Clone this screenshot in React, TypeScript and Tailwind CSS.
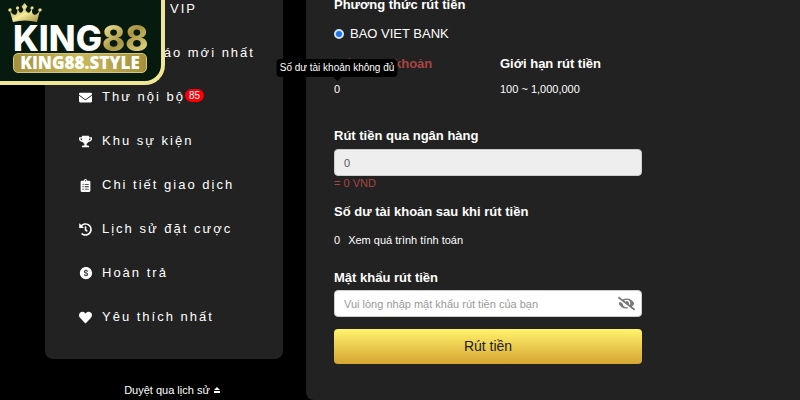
import { ReactNode, useState } from "react";
import { FaClipboardList, FaCrown, FaEnvelope, FaEyeSlash, FaHeart, FaHistory, FaTrophy } from "react-icons/fa";
import { AiFillDollarCircle } from "react-icons/ai";

interface IMenuItem {
  label: string;
  icon: ReactNode;
  badge?: number;
}

const menuItems: IMenuItem[] = [
  { label: "Cấp bậc VIP", icon: <FaCrown /> },
  { label: "Thông báo mới nhất", icon: <FaEnvelope /> },
  { label: "Thư nội bộ", icon: <FaEnvelope />, badge: 85 },
  { label: "Khu sự kiện", icon: <FaTrophy /> },
  { label: "Chi tiết giao dịch", icon: <FaClipboardList /> },
  { label: "Lịch sử đặt cược", icon: <FaHistory /> },
  { label: "Hoàn trả", icon: <AiFillDollarCircle size={14} /> },
  { label: "Yêu thích nhất", icon: <FaHeart /> },
];

const Logo = () => (
  <a
    href="#home"
    className="absolute left-0 top-0 z-20 flex h-[85px] w-[165px] flex-col items-start rounded-br-[20px] border-b-4 border-r-4 border-[#efe795] bg-[#071a10] pl-[13px]"
  >
    <svg viewBox="0 0 34 20" className="absolute left-2 top-[3px] h-5 w-[34px]" aria-hidden="true">
      <defs>
        <linearGradient id="crown" x1="0" y1="0" x2="1" y2="1">
          <stop offset="0" stopColor="#a8934a" />
          <stop offset="0.5" stopColor="#f3eb9c" />
          <stop offset="1" stopColor="#a08a3c" />
        </linearGradient>
      </defs>
      <g fill="url(#crown)">
        <path d="M5 19 L1.500 7 Q5 13 8 11.500 Q9.500 10 9.500 5 Q11.500 11 13.500 9.500 Q15.500 8 16.500 3 Q17.500 8 19.500 9.500 Q22 11 24 5 Q23.500 10 25.500 11.500 Q29 13 32 7 L29 19 Q17 16 5 19 Z" />
        <circle cx="2" cy="7" r="1.800" />
        <circle cx="9.500" cy="5" r="1.700" />
        <path d="M16.500 0 L19.500 3.500 L16.500 8 L13.500 3.500 Z" />
        <circle cx="24" cy="5" r="1.700" />
        <circle cx="32" cy="7" r="1.800" />
      </g>
    </svg>
    <span className="mt-5 flex font-['Inter',sans-serif] text-[35px] font-extrabold leading-[36px] text-white">
      KING
      <span className="bg-linear-to-br from-[#fff6ab] via-[#a89440] to-[#efe694] bg-clip-text text-transparent">88</span>
    </span>
    <span className="-mt-[3px] flex h-5 w-[134px] items-center justify-center rounded-[5px] border border-[#d5c76f] bg-linear-to-r from-[#a5903c] via-[#c9b95c] to-[#a5903c] font-['Open_Sans',sans-serif] text-[17px] font-extrabold leading-5 text-white">
      KING88.STYLE
    </span>
  </a>
);

const Sidebar = () => (
  <aside className="w-[238px] shrink-0">
    <nav className="-mt-[13px] rounded-lg bg-[#222222] pb-5 pl-[34px]">
      <ul>
        {menuItems.map((item) => (
          <li key={item.label}>
            <a href="#menu" className="flex h-11 items-center text-[13px] tracking-[2px] text-white">
              <span className="flex w-[23px] text-[13px]">{item.icon}</span>
              <span className="whitespace-nowrap">{item.label}</span>
              {item.badge && (
                <span className="mb-1 rounded-full bg-[#fb0007] px-1 text-[10px] leading-[13px] tracking-normal">
                  {item.badge}
                </span>
              )}
            </a>
          </li>
        ))}
      </ul>
    </nav>
    <button type="button" className="mt-[22px] flex w-full items-center justify-center gap-1 pl-4 text-[11px] leading-[18px] text-white">
      Duyệt qua lịch sử
      <svg viewBox="0 0 6 6" className="size-1.5" fill="currentColor" aria-hidden="true">
        <path d="M3 0 L6 3 H0 Z M0 4 H6 V6 H0 Z" />
      </svg>
    </button>
  </aside>
);

const WithdrawForm = () => {
  const [bank, setBank] = useState("bvb");
  const [showPassword, setShowPassword] = useState(false);

  return (
    <main className="-mt-[5px] min-w-0 flex-1 rounded-bl-lg bg-[#222222] px-7 pb-9 text-white">
      <form className="max-w-[308px]" onSubmit={(e) => e.preventDefault()}>
        <fieldset>
          <legend className="text-[13px] font-bold leading-5">Phương thức rút tiền</legend>
          <label className="mt-[9px] flex items-center gap-1.5 text-[13px] leading-5">
            <input
              type="radio"
              name="bank"
              checked={bank === "bvb"}
              onChange={() => setBank("bvb")}
              className="size-[10px] appearance-none rounded-full border-2 border-[#cfe2fb] bg-white checked:bg-[#1a73e8]"
            />
            BAO VIET BANK
          </label>
        </fieldset>
        <div className="mt-[10px] grid grid-cols-[166px_1fr] text-[13px] leading-5">
          <div>
            <h2 className="font-bold text-[#a94442]">Số dư tài khoản</h2>
            <p className="relative mt-[5px] text-[11px]">
              0
              <span
                role="tooltip"
                className="absolute bottom-[22px] left-[3px] w-[121px] -translate-x-1/2 whitespace-nowrap rounded bg-black text-center text-[10px] leading-[18px]"
              >
                Số dư tài khoản không đủ
                <span className="absolute left-1/2 top-full -translate-x-1/2 border-x-4 border-t-4 border-x-transparent border-t-black" />
              </span>
            </p>
          </div>
          <div>
            <h2 className="whitespace-nowrap font-bold">Giới hạn rút tiền</h2>
            <p className="mt-[5px] text-[11px]">100 ~ 1,000,000</p>
          </div>
        </div>

        <label htmlFor="amount" className="mt-[27px] block text-[13px] font-bold leading-5">
          Rút tiền qua ngân hàng
        </label>
        <input
          id="amount"
          type="text"
          readOnly
          value="0"
          className="mt-[3px] block h-[27px] w-full rounded border border-[#cccccc] bg-[#eeeeee] px-[9px] text-[11px] text-[#555555]"
        />
        <p className="text-[11px] leading-[14px] text-[#a94442]">= 0 VND</p>

        <h2 className="mt-3 text-[13px] font-bold leading-5">Số dư tài khoản sau khi rút tiền</h2>
        <p className="mt-2 flex gap-2 text-[11px] leading-5">
          <span>0</span>
          <a href="#detail">Xem quá trình tính toán</a>
        </p>

        <label htmlFor="password" className="mt-[18px] block text-[13px] font-bold leading-5">
          Mật khẩu rút tiền
        </label>
        <div className="mt-0.5 flex h-[27px] items-center rounded border border-[#cccccc] bg-white">
          <input
            id="password"
            type={showPassword ? "text" : "password"}
            placeholder="Vui lòng nhập mật khẩu rút tiền của bạn"
            className="h-full min-w-0 flex-1 bg-transparent px-[9px] text-[11px] text-[#555555] outline-none placeholder:text-[#999999]"
          />
          <button
            type="button"
            aria-label="Hiện mật khẩu"
            onClick={() => setShowPassword(!showPassword)}
            className="mr-[6px] text-[#777777]"
          >
            <FaEyeSlash size={17} />
          </button>
        </div>
        <button
          type="submit"
          className="mt-3 block h-[35px] w-full rounded bg-linear-to-b from-[#fff46c] to-[#d6a532] text-[14px] text-[#222222]"
        >
          Rút tiền
        </button>
      </form>
    </main>
  );
};

const App = () => {
  return (
    <div className="relative flex min-h-screen items-start gap-[23px] overflow-hidden bg-black pl-[45px] font-['Liberation_Sans',Arial,sans-serif]">
      <Logo />
      <Sidebar />
      <WithdrawForm />
    </div>
  );
};

export default App;
